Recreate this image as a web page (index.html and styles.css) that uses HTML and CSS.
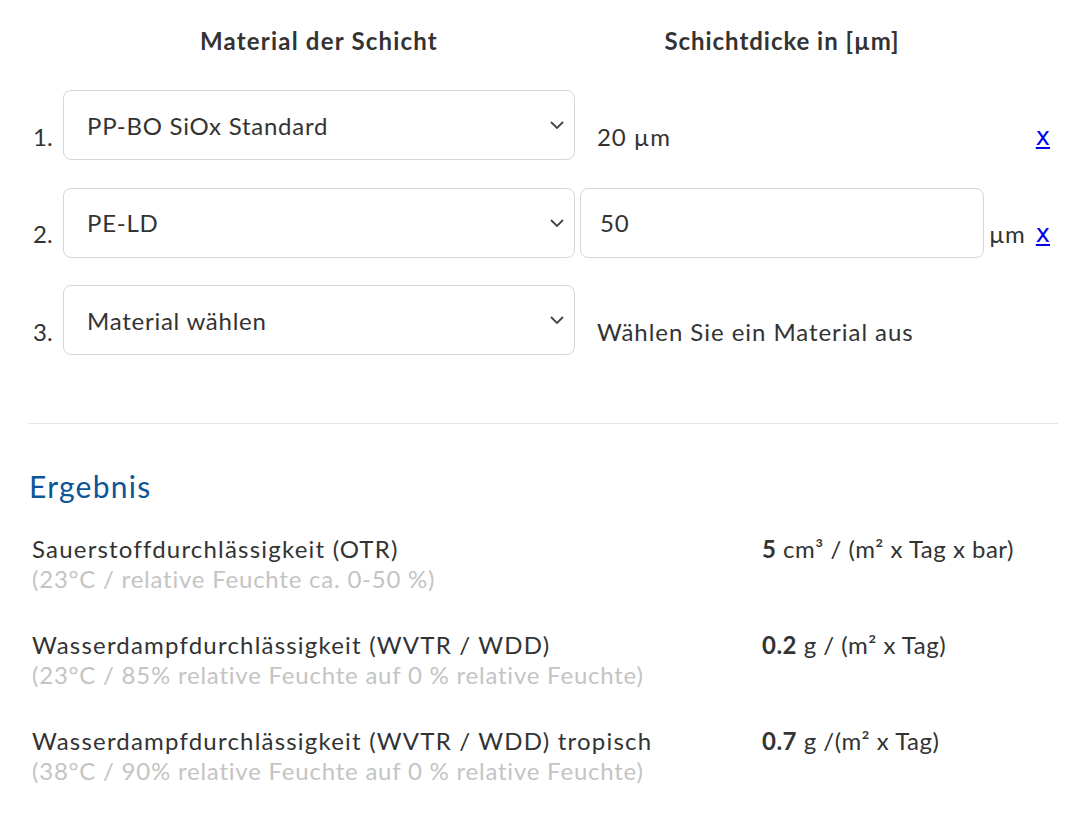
FILE: index.html
```html
<!DOCTYPE html>
<html lang="de">
<head>
  <meta charset="UTF-8">
  <title>Schichtaufbau Rechner</title>
  <link rel="stylesheet" href="styles.css">
</head>
<body>
  <div class="calc">
    <div class="layer-grid">
      <div></div>
      <div class="col-head">Material der Schicht</div>
      <div class="col-head thick-head">Schichtdicke in [µm]</div>
      <div></div>
      <div></div>

      <!-- Schicht 1 -->
      <div class="num">1.</div>
      <div class="select-wrap">
        <select class="field">
          <option>PP-BO SiOx Standard</option>
        </select>
        <svg class="chevron" viewBox="0 0 14 8" width="14" height="8"><path d="M1 1 L7 7 L13 1"/></svg>
      </div>
      <div class="thick-text">20 µm</div>
      <div></div>
      <div class="del"><a href="#">x</a></div>

      <!-- Schicht 2 -->
      <div class="num">2.</div>
      <div class="select-wrap">
        <select class="field">
          <option>PE-LD</option>
        </select>
        <svg class="chevron" viewBox="0 0 14 8" width="14" height="8"><path d="M1 1 L7 7 L13 1"/></svg>
      </div>
      <div><input class="field thick-input" type="text" value="50"></div>
      <div class="unit">µm</div>
      <div class="del"><a href="#">x</a></div>

      <!-- Schicht 3 -->
      <div class="num">3.</div>
      <div class="select-wrap">
        <select class="field">
          <option>Material wählen</option>
        </select>
        <svg class="chevron" viewBox="0 0 14 8" width="14" height="8"><path d="M1 1 L7 7 L13 1"/></svg>
      </div>
      <div class="thick-text">Wählen Sie ein Material aus</div>
      <div></div>
      <div></div>
    </div>

    <hr>

    <h2>Ergebnis</h2>

    <div class="results">
      <div class="res-label">
        Sauerstoffdurchlässigkeit (OTR)
        <span class="cond">(23°C / relative Feuchte ca. 0-50 %)</span>
      </div>
      <div class="res-value"><strong>5</strong> cm³ / (m² x Tag x bar)</div>

      <div class="res-label">
        Wasserdampfdurchlässigkeit (WVTR / WDD)
        <span class="cond">(23°C / 85% relative Feuchte auf 0 % relative Feuchte)</span>
      </div>
      <div class="res-value"><strong>0.2</strong> g / (m² x Tag)</div>

      <div class="res-label">
        Wasserdampfdurchlässigkeit (WVTR / WDD) tropisch
        <span class="cond">(38°C / 90% relative Feuchte auf 0 % relative Feuchte)</span>
      </div>
      <div class="res-value"><strong>0.7</strong> g /(m² x Tag)</div>
    </div>
  </div>
</body>
</html>
```

FILE: styles.css
```css
body { margin: 0; background: #fff; color: #333; font-family: Lato, "Noto Sans", sans-serif; font-size: 24px; }
.calc { width: 1030px; padding: 20px 0 0 28px; }

.layer-grid { display: grid; grid-template-columns: 35px 512px 409px 46px 1fr; align-items: center; }
.col-head { font-weight: bold; text-align: center; line-height: 36px; padding: 3px 0 31px; align-self: start; letter-spacing: 1.2px; }
.thick-head { padding-left: 5px; letter-spacing: 0.95px; }
.num { padding: 0 0 4px 5px; line-height: 36px; }

.select-wrap { position: relative; }
.field { display: block; box-sizing: border-box; height: 70px; margin: 0 0 27.5px; border: 1px solid #d6d6d6; border-radius: 8px; background: #fff; color: #333; font-family: Lato, sans-serif; font-size: 24px; letter-spacing: 0.75px; }
select.field { width: 512px; padding: 0 40px 0 23px; appearance: none; -webkit-appearance: none; }
.chevron { position: absolute; right: 11px; top: 31px; fill: none; stroke: #444; stroke-width: 1.8; }
.thick-input { width: 404px; margin-left: 5px; padding: 0 19px; }

.thick-text { padding: 0 0 4px 22px; line-height: 36px; letter-spacing: 0.95px; }
.unit { padding: 0 0 4px 5px; line-height: 36px; letter-spacing: 0.5px; }
.del { text-align: right; padding: 0 8px 4px 0; font-family: "DejaVu Sans", sans-serif; line-height: 36px; }
.del a { color: #0000ee; }

hr { border: 0; border-top: 1px solid #e6e6e6; margin: 40px 0 0; }
h2 { margin: 44px 0 30px 1px; font-size: 30px; font-weight: normal; line-height: 36px; color: #0d5597; letter-spacing: 1.25px; }

.results { display: grid; grid-template-columns: 730px 1fr; row-gap: 36px; line-height: 30px; }
.res-label, .res-value { padding-left: 4px; }
.res-label { letter-spacing: 1.2px; }
.res-value { letter-spacing: 0.5px; }
.cond { display: block; color: #c4c4c4; letter-spacing: 0.78px; }
```
